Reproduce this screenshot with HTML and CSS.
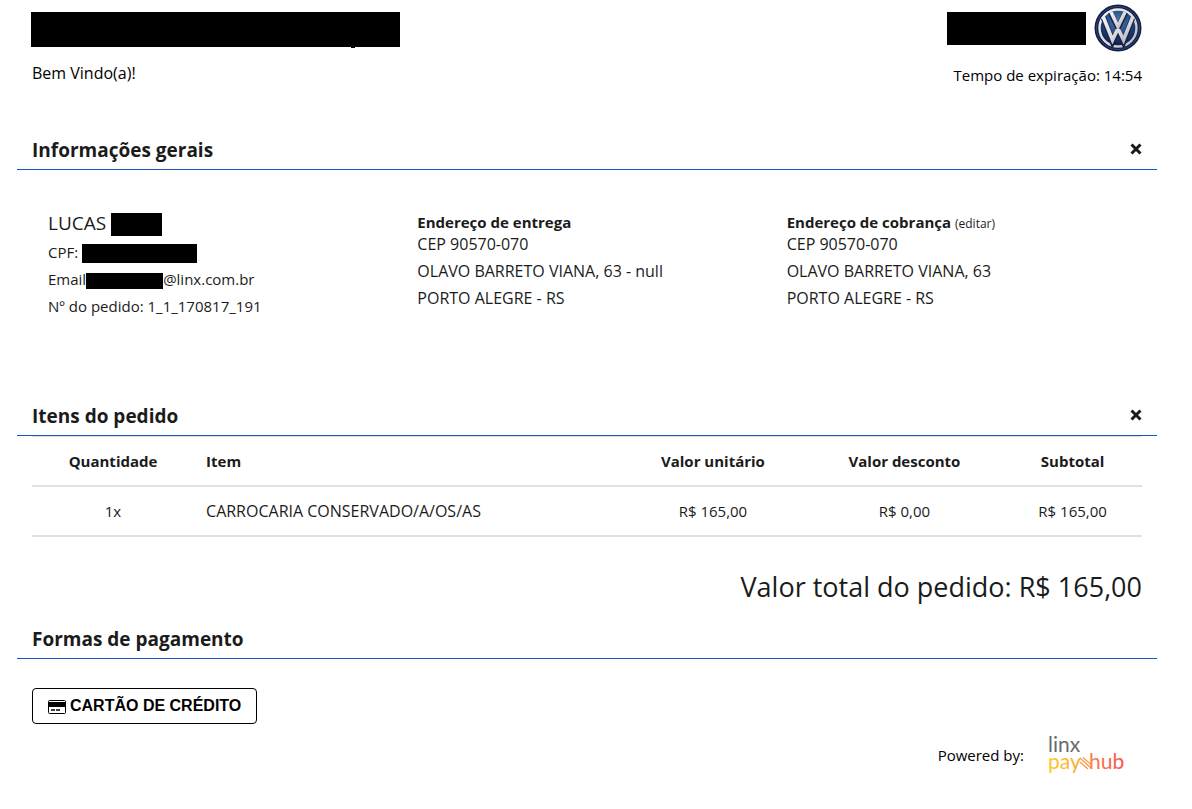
FILE: index.html
```html
<!DOCTYPE html>
<html lang="pt-BR">
<head>
<meta charset="utf-8">
<meta name="viewport" content="width=device-width, initial-scale=1">
<title>Pagamento</title>
<link rel="stylesheet" href="styles.css">
</head>
<body>
<div class="container">
  <header class="header">
    <div>
      <div class="redacted redacted-title"></div>
      <p class="welcome">Bem Vindo(a)!</p>
    </div>
    <div class="header-right">
      <div class="brand">
        <div class="redacted redacted-brand"></div>
        <svg class="brand-logo" viewBox="0 0 48 48" role="img" aria-label="Volkswagen">
          <defs>
            <radialGradient id="blue" cx="50%" cy="32%" r="65%">
              <stop offset="0" stop-color="#4a78b0"/><stop offset="0.55" stop-color="#234a82"/><stop offset="1" stop-color="#0d1c44"/>
            </radialGradient>
            <linearGradient id="silver" x1="0" y1="0" x2="1" y2="1">
              <stop offset="0" stop-color="#f4f1f1"/><stop offset="0.6" stop-color="#d9d7dc"/><stop offset="1" stop-color="#b3b1bb"/>
            </linearGradient>
          </defs>
          <circle cx="24" cy="24" r="23.5" fill="#131d42"/>
          <circle cx="24" cy="24" r="21.500" fill="none" stroke="#2c4a7f" stroke-width="1"/>
          <circle cx="24" cy="24" r="18.5" fill="url(#blue)" stroke="url(#silver)" stroke-width="2.400"/>
          <g fill="none" stroke-linejoin="miter">
            <path d="M16.500 8.500 L24 24 L31.500 8.500" stroke="#14244d" stroke-width="5.500"/>
            <path d="M9.500 14 L18.500 38 L24 26 L29.500 38 L38.500 14" stroke="#14244d" stroke-width="5.500"/>
            <path d="M17 8 L24 22.500 L31 8" stroke="url(#silver)" stroke-width="3.600"/>
            <path d="M9.500 13.500 L18.500 36 L23 26.500 H25 L29.500 36 L38.500 13.500" stroke="url(#silver)" stroke-width="3.600"/>
          </g>
        </svg>
      </div>
      <p class="timer">Tempo de expiração: 14:54</p>
    </div>
  </header>

  <section class="general">
    <div class="section-head">
      <h2>Informações gerais</h2>
      <button class="close" type="button" aria-label="Fechar informações gerais">
        <svg viewBox="0 0 12 12"><path d="M1.500 1.500 L10.500 10.500 M10.500 1.500 L1.500 10.500"/></svg>
      </button>
    </div>
    <div class="info">
      <div class="info-col">
        <p class="name">LUCAS <span class="redacted redacted-name"></span></p>
        <p>CPF: <span class="redacted redacted-cpf"></span></p>
        <p>Email<span class="redacted redacted-email"></span>@linx.com.br</p>
        <p>Nº do pedido: 1_1_170817_191</p>
      </div>
      <div class="info-col address">
        <h3>Endereço de entrega</h3>
        <p>CEP 90570-070</p>
        <p>OLAVO BARRETO VIANA, 63 - null</p>
        <p>PORTO ALEGRE - RS</p>
      </div>
      <div class="info-col address">
        <h3>Endereço de cobrança <a class="edit" href="#">(editar)</a></h3>
        <p>CEP 90570-070</p>
        <p>OLAVO BARRETO VIANA, 63</p>
        <p>PORTO ALEGRE - RS</p>
      </div>
    </div>
  </section>

  <section>
    <div class="section-head">
      <h2>Itens do pedido</h2>
      <button class="close" type="button" aria-label="Fechar itens do pedido">
        <svg viewBox="0 0 12 12"><path d="M1.500 1.500 L10.500 10.500 M10.500 1.500 L1.500 10.500"/></svg>
      </button>
    </div>
    <div class="section-body">
      <table class="items">
        <thead>
          <tr><th class="c-qty">Quantidade</th><th class="c-item">Item</th><th class="c-unit">Valor unitário</th><th class="c-disc">Valor desconto</th><th>Subtotal</th></tr>
        </thead>
        <tbody>
          <tr><td>1x</td><td class="c-item">CARROCARIA CONSERVADO/A/OS/AS</td><td>R$ 165,00</td><td>R$ 0,00</td><td>R$ 165,00</td></tr>
        </tbody>
      </table>
      <p class="total">Valor total do pedido: R$ 165,00</p>
    </div>
  </section>

  <section>
    <div class="section-head">
      <h2>Formas de pagamento</h2>
    </div>
    <div class="section-body payment">
      <button class="pay" type="button">
        <svg viewBox="0 0 18 16" aria-hidden="true">
          <rect x="0.500" y="2.500" width="17" height="13" rx="1" fill="#fff" stroke="#000"/>
          <path d="M1 4H17V9H1Z" fill="#000"/>
          <path d="M3 12H7M8 12H12" stroke="#000" stroke-width="1.600"/>
        </svg>
        <span>CARTÃO DE CRÉDITO</span>
      </button>
    </div>
  </section>

  <footer class="footer">
    <span>Powered by:</span>
    <svg class="linx-logo" viewBox="0 0 80 48" role="img" aria-label="Linx Payhub">
      <defs>
        <linearGradient id="pay" x1="0" y1="0" x2="1" y2="0">
          <stop offset="0" stop-color="#fdc62f"/><stop offset="1" stop-color="#fba92f"/>
        </linearGradient>
        <linearGradient id="hub" x1="0" y1="0" x2="1" y2="0">
          <stop offset="0" stop-color="#f9804a"/><stop offset="1" stop-color="#f7544c"/>
        </linearGradient>
      </defs>
      <text x="0" y="21" class="logo-linx">linx</text>
      <text x="0" y="38" class="logo-pay">pay</text>
      <text x="41" y="38" class="logo-hub">hub</text>
      <path d="M32 27L43 37M35 26.500L44 34.500M32 31L40 38" fill="none" stroke="#f9953f" stroke-width="1.200"/>
    </svg>
  </footer>
</div>
</body>
</html>
```
FILE: styles.css
```css
* { box-sizing: border-box; }
body {
  margin: 0;
  padding: 0 18px 0 0;
  background: #fff;
  color: #1b1b1b;
  font-family: "Open Sans", "Noto Sans", sans-serif;
  font-size: 15px;
  line-height: 24px;
}
h2, h3, p { margin: 0; }
button { font: inherit; cursor: pointer; }
.container { max-width: 1140px; margin: 0 auto; }

.redacted { display: inline-block; background: #000; }
.header {
  display: flex;
  justify-content: space-between;
  height: 132px;
  padding: 4px 15px 0 14px;
}
.redacted-title { display: block; position: relative; width: 369px; height: 35px; margin-top: 8px; }
.redacted-title::after {
  content: "";
  position: absolute;
  left: 320px;
  top: 35px;
  width: 4px;
  height: 1px;
  background: #000;
}
.welcome { margin: 14px 0 0 1px; font-size: 16px; color: #000; }
.header-right { display: flex; flex-direction: column; align-items: flex-end; }
.brand { display: flex; align-items: center; gap: 8px; }
.redacted-brand { width: 139px; height: 33px; }
.brand-logo { width: 48px; height: 48px; }
.timer { margin-top: 11px; color: #000; }

.section-head {
  display: flex;
  align-items: center;
  justify-content: space-between;
  height: 38px;
  padding: 0 15px 2px;
  border-bottom: 1px solid #1857b8;
}
.section-head h2 { font-size: 19px; font-weight: 700; line-height: 24px; }
.close { display: flex; padding: 0 0 2px; border: 0; background: none; }
.close svg { width: 12px; height: 12px; }
.close path { fill: none; stroke: #1b1b1b; stroke-width: 3; }
.section-body { padding: 0 15px; }

.general { min-height: 266px; }
.info { display: grid; grid-template-columns: repeat(3, 1fr); padding: 39px 16px 0; }
.info-col { padding: 0 15px; line-height: 27px; }
.info-col .redacted { vertical-align: middle; }
.info-col .name { padding-bottom: 2px; font-size: 19px; line-height: 28px; }
.info-col .redacted-name { width: 51px; height: 23px; }
.redacted-cpf { width: 115px; height: 19px; }
.redacted-email { width: 77px; height: 16px; }
.address { font-size: 16px; }
.address h3 { padding-top: 5px; font-size: 15px; line-height: 17px; }
.edit { color: inherit; font-size: 12px; font-weight: 400; line-height: 1; text-decoration: none; }

.items { width: 100%; table-layout: fixed; border-collapse: separate; border-spacing: 0; border-top: 1px solid #dee2e6; }
.items th, .items td { height: 50px; padding: 0 12px; text-align: center; border-bottom: 2px solid #dee2e6; }
.items .c-item { text-align: left; }
.items td.c-item { font-size: 16px; }
.c-qty { width: 14.6%; }
th.c-item { width: 38.4%; }
.c-unit { width: 16.7%; }
.c-disc { width: 17.8%; }
.total { padding: 30px 0 14px; font-size: 27px; line-height: 40px; text-align: right; }

.payment { padding-top: 29px; }
.pay {
  display: flex;
  align-items: center;
  gap: 4px;
  height: 36px;
  padding: 0 15px;
  color: #000;
  background: #fff;
  border: 1px solid #000;
  border-radius: 4px;
  font: bold 16px "Liberation Sans", Arial, sans-serif;
}
.pay svg { width: 18px; height: 16px; }
.footer {
  display: flex;
  align-items: center;
  justify-content: flex-end;
  gap: 24px;
  padding: 7px 29px 0 0;
  color: #000;
}
.linx-logo { width: 80px; height: 48px; }
.logo-linx, .logo-pay, .logo-hub { font-family: Lato, sans-serif; font-weight: 400; font-size: 21px; }
.logo-linx { fill: #6b6b6d; }
.logo-pay { fill: url(#pay); }
.logo-hub { fill: url(#hub); }
```
